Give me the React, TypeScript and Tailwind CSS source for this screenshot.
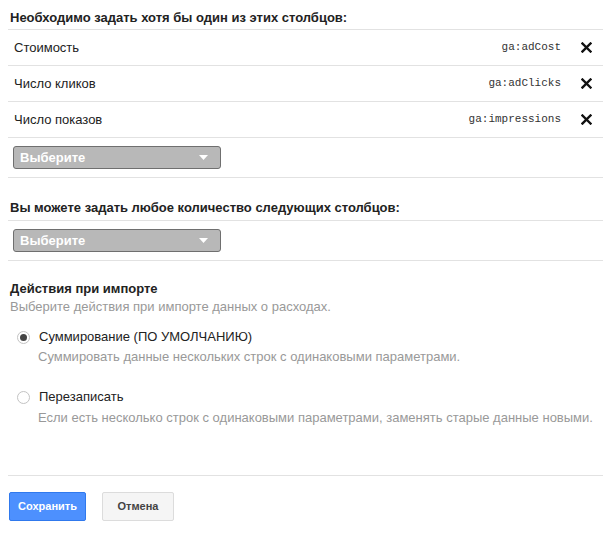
import React from "react";

const font = { fontFamily: '"Liberation Sans", Arial, sans-serif' };

function XIcon() {
  return (
    <svg width="11" height="11" viewBox="0 0 11 11" className="shrink-0">
      <path d="M1.5 1.5 L9.5 9.5 M9.5 1.5 L1.5 9.5" stroke="#111" strokeWidth="2.4" strokeLinecap="square" />
    </svg>
  );
}

function Select() {
  return (
    <div className="w-[208px] h-[23px] ml-[5px] rounded-[3px] border border-[#6f6f6f] bg-[#b8b8b8] flex items-center justify-between pl-[6px] pr-[12px]">
      <span className="text-white font-bold text-[13px] leading-[15px]">Выберите</span>
      <svg width="9" height="5" viewBox="0 0 9 5">
        <path d="M0 0 L9 0 L4.5 5 Z" fill="#fff" />
      </svg>
    </div>
  );
}

function Row({ label, code }: { label: string; code: string }) {
  return (
    <div className="h-[36px] border-b border-[#e2e2e2] flex items-center pl-[6px] pr-[11px]">
      <span className="flex-1 text-[13px] text-[#222]">{label}</span>
      <span className="text-[11px] text-[#333]" style={{ fontFamily: '"Liberation Mono", "Courier New", monospace' }}>
        {code}
      </span>
      <span className="ml-[20px]">
        <XIcon />
      </span>
    </div>
  );
}

function Radio({ checked }: { checked?: boolean }) {
  return (
    <span className="w-[13px] h-[13px] rounded-full border border-[#c3c3c3] bg-white flex items-center justify-center shrink-0">
      {checked && <span className="w-[7px] h-[7px] rounded-full bg-[#444]" />}
    </span>
  );
}

export default function App() {
  return (
    <div className="w-[616px] h-[536px] bg-white pl-[8px] pr-[13px]" style={font}>
      <div className="pt-[10px] pb-[4px] pl-[2px] leading-[15px] text-[13px] font-bold text-[#222] border-b border-[#e2e2e2]">
        Необходимо задать хотя бы один из этих столбцов:
      </div>
      <Row label="Стоимость" code="ga:adCost" />
      <Row label="Число кликов" code="ga:adClicks" />
      <Row label="Число показов" code="ga:impressions" />
      <div className="h-[40px] border-b border-[#e2e2e2] flex items-center">
        <Select />
      </div>

      <div className="pt-[22px] pb-[5px] pl-[2px] leading-[15px] text-[13px] font-bold text-[#222] border-b border-[#e2e2e2]">
        Вы можете задать любое количество следующих столбцов:
      </div>
      <div className="h-[40px] border-b border-[#e2e2e2] flex items-center">
        <Select />
      </div>

      <div className="pt-[20px] pl-[2px]">
        <div className="text-[13px] leading-[16px] font-bold text-[#222]">Действия при импорте</div>
        <div className="mt-[2px] text-[13px] leading-[16px] text-[#999]">
          Выберите действия при импорте данных о расходах.
        </div>
      </div>

      <div className="pt-[14px] pl-[9px]">
        <div className="flex items-center gap-[9px] h-[16px]">
          <Radio checked />
          <span className="text-[13px] leading-[16px] text-[#222]">Суммирование (ПО УМОЛЧАНИЮ)</span>
        </div>
        <div className="mt-[4px] pl-[21px] text-[13px] leading-[16px] text-[#999]">
          Суммировать данные нескольких строк с одинаковыми параметрами.
        </div>
        <div className="mt-[24px] flex items-center gap-[9px] h-[16px]">
          <Radio />
          <span className="text-[13px] leading-[16px] text-[#222]">Перезаписать</span>
        </div>
        <div className="mt-[5px] pl-[21px] text-[13px] leading-[16px] text-[#999]">
          Если есть несколько строк с одинаковыми параметрами, заменять старые данные новыми.
        </div>
      </div>

      <div className="mt-[49px] border-b border-[#e2e2e2]" />

      <div className="mt-[16px] pl-[1px] flex gap-[16px]">
        <button className="w-[77px] h-[29px] rounded-[2px] border border-[#3079ed] bg-[#4d90fe] text-white text-[11px] font-bold">
          Сохранить
        </button>
        <button className="w-[72px] h-[29px] rounded-[2px] border border-[#dcdcdc] bg-[#f5f5f5] text-[#444] text-[11px] font-bold">
          Отмена
        </button>
      </div>
    </div>
  );
}
